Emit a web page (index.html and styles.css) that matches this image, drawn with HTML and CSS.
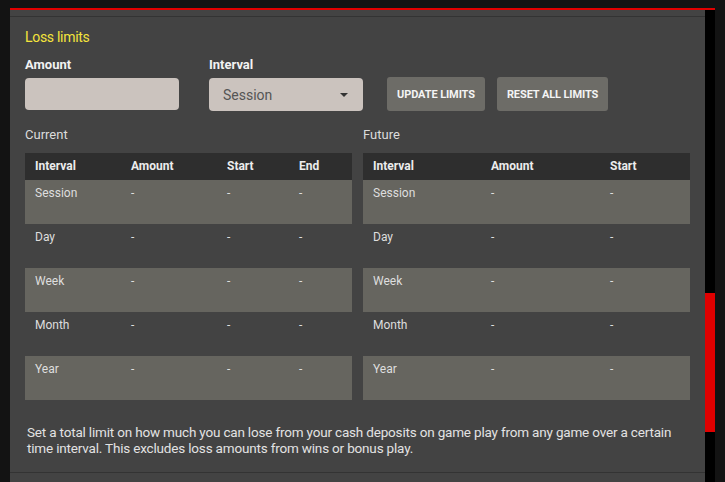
FILE: index.html
```html
<!DOCTYPE html>
<html lang="en">
<head>
    <meta charset="UTF-8">
    <title>Loss limits</title>
    <link rel="stylesheet" href="styles.css">
</head>
<body>
    <div class="frame">
        <div class="panel">
            <div class="panel-top"></div>
            <div class="panel-body">
                <h2 class="title">Loss limits</h2>
                <div class="form-row">
                    <div class="field">
                        <label>Amount</label>
                        <input type="text" class="input-amount">
                    </div>
                    <div class="field">
                        <label>Interval</label>
                        <div class="select">
                            <span>Session</span>
                            <svg width="8" height="4" viewBox="0 0 8 4"><path d="M0 0h8L4 4z" fill="#333"/></svg>
                        </div>
                    </div>
                    <button class="btn">UPDATE LIMITS</button>
                    <button class="btn">RESET ALL LIMITS</button>
                </div>
                <div class="tables">
                    <div class="block">
                        <div class="block-title">Current</div>
                        <div class="table current">
                            <div class="row head"><span>Interval</span><span>Amount</span><span>Start</span><span>End</span></div>
                            <div class="row odd"><span>Session</span><span>-</span><span>-</span><span>-</span></div>
                            <div class="row"><span>Day</span><span>-</span><span>-</span><span>-</span></div>
                            <div class="row odd"><span>Week</span><span>-</span><span>-</span><span>-</span></div>
                            <div class="row"><span>Month</span><span>-</span><span>-</span><span>-</span></div>
                            <div class="row odd"><span>Year</span><span>-</span><span>-</span><span>-</span></div>
                        </div>
                    </div>
                    <div class="block">
                        <div class="block-title">Future</div>
                        <div class="table future">
                            <div class="row head"><span>Interval</span><span>Amount</span><span>Start</span></div>
                            <div class="row odd"><span>Session</span><span>-</span><span>-</span></div>
                            <div class="row"><span>Day</span><span>-</span><span>-</span></div>
                            <div class="row odd"><span>Week</span><span>-</span><span>-</span></div>
                            <div class="row"><span>Month</span><span>-</span><span>-</span></div>
                            <div class="row odd"><span>Year</span><span>-</span><span>-</span></div>
                        </div>
                    </div>
                </div>
                <p class="note">Set a total limit on how much you can lose from your cash deposits on game play from any game over a certain time interval. This excludes loss amounts from wins or bonus play.</p>
            </div>
            <div class="panel-bottom"></div>
        </div>
        <div class="scrollbar"><div class="thumb"></div></div>
    </div>
</body>
</html>
```
FILE: styles.css
```css
body {
    margin: 0;
    background-color: #131313;
    font-family: Roboto, "Liberation Sans", sans-serif;
    color: #e0e0e0;
    height: 482px;
    overflow: hidden;
}
.frame {
    display: flex;
    margin: 8px 10px 0 10px;
    border-top: 2px solid #e00000;
    height: 472px;
}
.panel {
    width: 695px;
    background-color: #434343;
}
.panel-top {
    height: 6px;
    border-bottom: 1px solid #333;
}
.panel-body {
    padding: 0 15px;
}
.title {
    margin: 11px 0 0;
    font-size: 14px;
    font-weight: normal;
    color: #f5e43c;
    line-height: 18px;
    letter-spacing: -0.3px;
}
.form-row {
    display: flex;
    align-items: flex-end;
    margin-top: 11px;
}
.field {
    display: flex;
    flex-direction: column;
    margin-right: 30px;
}
.field label {
    font-size: 13px;
    font-weight: bold;
    color: #f2f2f2;
    line-height: 16px;
    margin-bottom: 5px;
}
.input-amount {
    width: 154px;
    height: 32px;
    box-sizing: border-box;
    border: none;
    border-radius: 4px;
    background-color: #cbc3be;
    margin-bottom: 1px;
}
.select {
    width: 154px;
    height: 33px;
    box-sizing: border-box;
    border-radius: 4px;
    background-color: #cbc3be;
    display: flex;
    align-items: center;
    justify-content: space-between;
    padding: 0 15px 0 14px;
    font-size: 14px;
    color: #555;
}
.btn {
    height: 34px;
    margin-right: 12px;
    padding: 0 10px;
    border: none;
    border-radius: 3px;
    background-color: #6d6c67;
    color: #f4f4f4;
    font-family: Roboto, "Liberation Sans", sans-serif;
    font-size: 11px;
    font-weight: bold;
    letter-spacing: -0.1px;
}
.btn:first-of-type {
    margin-left: -6px;
}
.tables {
    display: flex;
    gap: 11px;
    margin-top: 16px;
}
.block {
    width: 327px;
}
.block-title {
    font-size: 13px;
    color: #dcdcdc;
    line-height: 16px;
    margin-bottom: 10px;
}
.row {
    display: grid;
    height: 44px;
    font-size: 12px;
    color: #dedede;
}
.row span {
    padding: 6px 0 0 10px;
}
.row.head {
    height: 27px;
    background-color: #2e2e2e;
    font-weight: bold;
    color: #ececec;
}
.row.head span {
    padding-top: 6px;
}
.row.odd {
    background-color: #66655f;
}
.current .row {
    grid-template-columns: 96px 96px 72px 1fr;
}
.future .row {
    grid-template-columns: 118px 119px 1fr;
}
.note {
    margin: 24px 0 0 2px;
    font-size: 13.5px;
    line-height: 16px;
    color: #e2e2e2;
    letter-spacing: -0.18px;
}
.panel-bottom {
    margin-top: 16px;
    border-top: 1px solid #333;
}
.scrollbar {
    width: 10px;
    background-color: #000;
    padding-top: 283px;
}
.thumb {
    height: 139px;
    background-color: #e00000;
}
```
